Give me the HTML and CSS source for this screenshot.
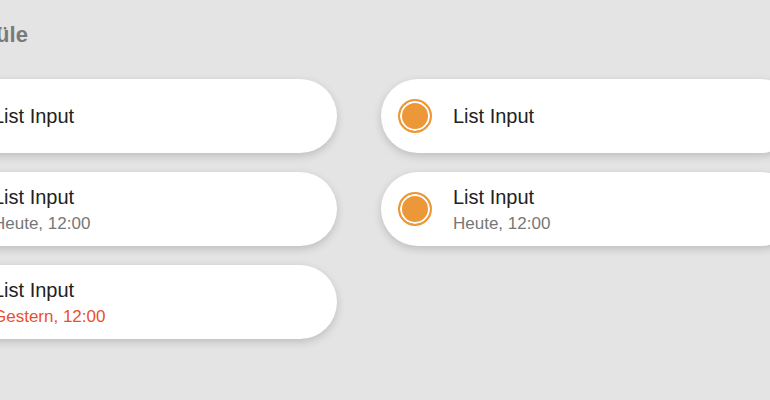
FILE: index.html
```html
<!DOCTYPE html>
<html lang="de">
    <head>
        <link rel="stylesheet" href="styles.css">
        <title>List Input</title>
    </head>

    <body>
        <div id="page">
            <h2 class="title">Spüle</h2>

            <div class="list">
                <!-- left column: no marker -->
                <div class="item">
                    <div class="slot"></div>
                    <div class="text">
                        <p class="label">List Input</p>
                    </div>
                </div>
                <!-- right column: with marker -->
                <div class="item">
                    <div class="slot"><span class="dot"></span></div>
                    <div class="text">
                        <p class="label">List Input</p>
                    </div>
                </div>

                <div class="item">
                    <div class="slot"></div>
                    <div class="text">
                        <p class="label">List Input</p>
                        <p class="meta">Heute, 12:00</p>
                    </div>
                </div>
                <div class="item">
                    <div class="slot"><span class="dot"></span></div>
                    <div class="text">
                        <p class="label">List Input</p>
                        <p class="meta">Heute, 12:00</p>
                    </div>
                </div>

                <div class="item">
                    <div class="slot"></div>
                    <div class="text">
                        <p class="label">List Input</p>
                        <p class="meta overdue">Gestern, 12:00</p>
                    </div>
                </div>
            </div>
        </div>
    </body>
</html>
```
FILE: styles.css
```css
* {
    box-sizing: border-box;
    margin: 0;
    padding: 0;
}
html,
body {
    height: 100%;
    overflow: hidden;
    background: #e4e4e4;
    font-family: 'Liberation Sans', Arial, Helvetica, sans-serif;
}
#page {
    padding-top: 21px;
}
.title {
    margin-left: -32px;
    height: 58px;
    font-size: 22px;
    font-weight: 700;
    line-height: 28px;
    color: #7a7a7a;
}
.list {
    display: grid;
    grid-template-columns: 416px 416px;
    column-gap: 44px;
    row-gap: 19px;
    margin-left: -79px;
}
.item {
    display: flex;
    align-items: center;
    height: 74px;
    border-radius: 37px;
    background: #fff;
    box-shadow: 0 3px 8px rgba(0, 0, 0, 0.17);
}
.slot {
    width: 72px;
    padding-left: 17px;
    flex-shrink: 0;
    display: flex;
    align-items: center;
}
.dot {
    display: block;
    width: 34px;
    height: 34px;
    border-radius: 50%;
    background: #ec9838;
    border: 2px solid #ec9838;
    box-shadow: inset 0 0 0 2px #fff;
}
.text {
    display: flex;
    flex-direction: column;
}
.label {
    font-size: 20px;
    line-height: 24px;
    color: #222;
}
.meta {
    margin-top: 4px;
    font-size: 17px;
    line-height: 21px;
    color: #777;
}
.meta.overdue {
    color: #eb4f2b;
}
```
